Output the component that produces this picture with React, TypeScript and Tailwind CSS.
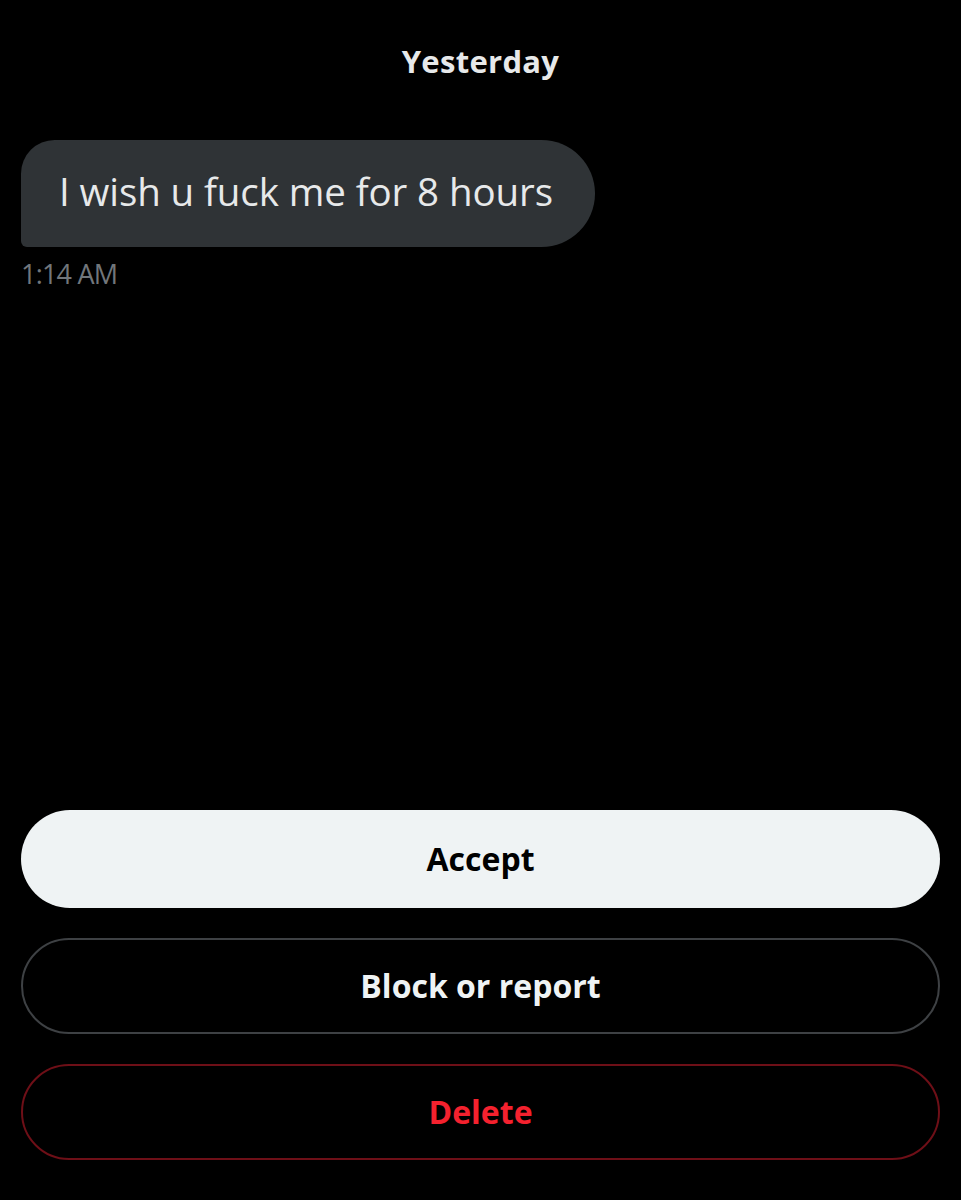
import React from "react";

export default function App() {
  return (
    <div className="w-[961px] h-[1200px] bg-black flex flex-col px-[21px]" style={{ fontFamily: '"Open Sans", "Liberation Sans", sans-serif' }}>
      <div className="pt-[41px] h-[140px] flex justify-center">
        <span className="text-[31px] leading-[40px] font-bold text-[#e7e9ea] tracking-[0.3px]">Yesterday</span>
      </div>
      <div className="flex">
        <div className="h-[107px] w-[574px] bg-[#2f3336] rounded-tl-[34px] rounded-tr-[54px] rounded-br-[54px] rounded-bl-[6px] flex items-center pl-[38px] pb-[4px]">
          <span className="text-[38.5px] leading-none text-[#e7e9ea] font-normal tracking-[-0.1px]">I wish u fuck me for 8 hours</span>
        </div>
      </div>
      <div className="pt-[10px] text-[27px] leading-[34px] text-[#71767b] tracking-[-0.8px]">1:14 AM</div>
      <div className="flex-1" />
      <div className="flex flex-col gap-[30px] pb-[40px]">
        <button className="h-[98px] w-full rounded-full bg-[#eff3f4] flex items-center justify-center text-[32px] font-bold text-black">Accept</button>
        <button className="h-[96px] w-full rounded-full border-2 border-[#3e4144] flex items-center justify-center text-[32px] font-bold text-[#eff3f4]">Block or report</button>
        <button className="h-[96px] w-full rounded-full border-2 border-[#6e0f17] flex items-center justify-center text-[32px] font-bold text-[#f4212e]">Delete</button>
      </div>
    </div>
  );
}
